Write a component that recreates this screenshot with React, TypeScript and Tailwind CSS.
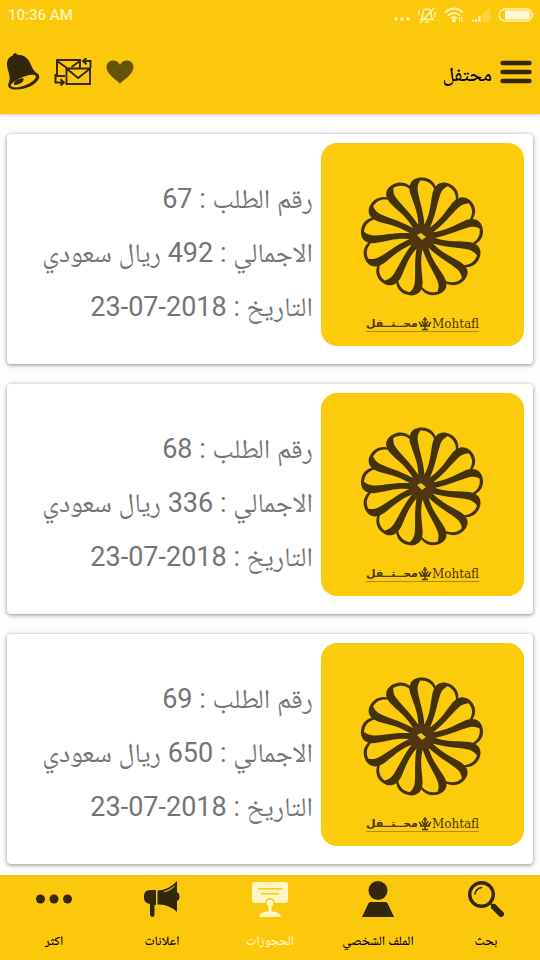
import type { ReactNode } from "react";

const ORDERS = [
  { id: 67, total: 492, date: "23-07-2018" },
  { id: 68, total: 336, date: "23-07-2018" },
  { id: 69, total: 650, date: "23-07-2018" },
];

const PETALS = Array.from({ length: 13 }, (_, i) => (i * 360) / 13);

function StatusBar() {
  return (
    <div dir="ltr" className="flex h-[30px] items-center justify-between pr-1.5 pl-2 text-[#fff3b0]">
      <span className="text-[15px] leading-5 font-medium">10:36 AM</span>
      <div className="flex items-center gap-2">
        <svg className="mt-2 h-1 w-4" viewBox="0 0 16 4" fill="currentColor">
          <circle cx="2" cy="2" r="1.8" /><circle cx="8" cy="2" r="1.8" /><circle cx="14" cy="2" r="1.8" />
        </svg>
        <svg className="h-[18px] w-[18px]" viewBox="0 0 18 18" fill="none" stroke="currentColor" strokeWidth="1.5">
          <path d="M3 13.5h12c-1.6-1.5-1.8-3-1.8-5.500C13.200 4.800 11.800 3 9 3S4.800 4.800 4.800 8c0 2.500-.2 4-1.800 5.500ZM7 15.500q2 1.500 4 0M2 17 16 2M1 4v5M17 6v5" />
        </svg>
        <svg className="h-[16px] w-[20px]" viewBox="0 0 20 16" fill="none" stroke="currentColor" strokeWidth="1.8">
          <path d="M1 5.500q9-8 18 0M4 8.500q6-5 12 0M7 11.500q3-2.500 6 0" />
          <circle cx="10" cy="13.500" r="1" fill="currentColor" />
          <path d="M15.500 10v5M18 10v5" strokeWidth="1.200" />
        </svg>
        <svg className="h-[14px] w-[18px]" viewBox="0 0 18 14">
          <path d="M10 14V6l8-6v14Z" fill="#fbd340" />
          <path d="M0 14v-2h2v2ZM3 14v-3h2v3ZM6 14V8h2.500v6Z" fill="currentColor" />
        </svg>
        <svg className="h-[14px] w-[36px]" viewBox="0 0 36 14">
          <rect x="1" y="1" width="33" height="12" rx="6" fill="none" stroke="currentColor" strokeWidth="1.300" />
          <path d="M7 2.500h22q3 0 3 4.500t-3 4.500H7Z" fill="#fff8d5" />
          <path d="M35 5v4" stroke="currentColor" />
        </svg>
      </div>
    </div>
  );
}

function Header() {
  return (
    <header className="relative z-10 bg-[#fbc80c] shadow-[0_1px_3px_rgba(0,0,0,0.2)]">
      <StatusBar />
      <div className="flex h-[84px] items-center justify-between pr-2 pl-1.5 text-[#33270a]">
        <div className="flex items-center gap-2">
          <button type="button" aria-label="القائمة">
            <svg className="h-6 w-8" viewBox="0 0 32 24" stroke="currentColor" strokeWidth="4.500" strokeLinecap="round">
              <path d="M2.500 3h27M2.500 12h27M2.500 21h27" />
            </svg>
          </button>
          <h1 className="pt-1 text-[20px] leading-8 font-medium text-black">محتفل</h1>
        </div>
        <div className="flex items-center gap-3.5">
          <button type="button" aria-label="المفضلة" className="text-[#66530a]">
            <svg className="h-6 w-7" viewBox="0 0 28 24" fill="currentColor">
              <path d="M14 23.500C10 19.500.500 14 .500 7.200.500 3 3.500.500 7.300.500 10.500.500 13 2.500 14 5c1-2.500 3.500-4.500 6.700-4.500 3.800 0 6.800 2.500 6.800 6.700 0 6.800-9.500 12.300-13.500 16.300Z" />
            </svg>
          </button>
          <button type="button" aria-label="الرسائل">
            <svg className="h-7 w-[38px]" viewBox="0 0 38 28" fill="none" stroke="currentColor" strokeWidth="1.900">
              <path d="M11 18H3V2h23v8M3 3l10 7M26 3l-8.500 6" />
              <path d="M12.500 10.500h23.500v15.500H12.500ZM13 11l11.200 9L35.500 11" />
              <path d="M36.500 10V3h-7M32.500 0 29 3l3.500 3.200M1.500 16v8.500h8M6.500 21.300 10 24.500l-3.500 3" />
            </svg>
          </button>
          <button type="button" aria-label="التنبيهات">
            <svg className="h-[38px] w-[34px]" viewBox="0 0 34 38">
              <path fillRule="evenodd" fill="currentColor" d="M7 2.500C7-.200 10.500-.500 11.200 1.800c6.500-.500 11.300 3.700 13.300 9 2 5 3.500 7.700 7 9.700 4.500 3.500 0 9.500-7.500 13C16 37.200 4.500 37.700 2.500 34c-1-2.200.2-4 .8-6C5 22 .5 16 1 10.500 1.300 6 3.800 3.500 7 2.500ZM5 33c2 2.500 10 1.500 17-2 6-3 9-6.800 7.300-8.500C27 20.700 19 22.500 12.500 26 7 29 4.200 31.500 5 33Z" />
              <path fill="currentColor" d="M8 32c-.5-3.500 2-5.500 9-7 2 2.500-1.500 6.500-9 7Z" />
            </svg>
          </button>
        </div>
      </div>
    </header>
  );
}

function BrandLogo() {
  return (
    <div className="flex h-[203px] w-[203px] shrink-0 flex-col items-center rounded-2xl bg-[#fccb0b] pt-8 text-[#4a3607]">
      <svg className="h-[124px] w-[128px]" viewBox="-63 -62 128 124" fill="#44330a">
        {PETALS.map((angle) => (
          <path
            key={angle}
            transform={`scale(1.03 1) rotate(${angle - 3})`}
            d="M-3-8C-2-24-6-32-8.500-42-12-54-6-60 3-59.500 12-59 17-52 17-43L16.200-42C14-51 10-57-.5-56.500 4-57-3-55-1.500-45-.5-35 3.500-24 3-8Z"
          />
        ))}
        <circle r="13" fill="#513610" />
        <path d="M-5-2-1-4 4 0 0 3Z" fill="#f0c41a" />
      </svg>
      <div dir="ltr" className="mt-[17px] flex h-4 items-center border-b border-[#b08a0a] whitespace-nowrap">
        <span dir="rtl" className="font-['DejaVu_Sans'] text-[11px] leading-4 font-bold">محــتــفل</span>
        <svg className="h-3.5 w-3.5" viewBox="0 0 14 14" fill="none" stroke="currentColor" strokeWidth="1.500">
          <path d="M7 0v13M5 2.500h4M1 5l3 4M13 5l-3 4M4 4l2 4M10 4 8 8M2 9h10M4 12.500h6" />
        </svg>
        <span className="font-['DejaVu_Serif'] text-[12px] leading-4">Mohtafl</span>
      </div>
    </div>
  );
}

function OrderCard({ id, total, date }: { id: number; total: number; date: string }) {
  return (
    <li className="flex h-[230px] items-center gap-2 rounded bg-white pr-[9px] pl-2 shadow-[0_1px_4px_rgba(0,0,0,0.45)]">
      <div className="mb-[9px]">
        <BrandLogo />
      </div>
      <div className="grow pt-2 text-[27px] leading-[54px] text-[#757575]">
        <p>رقم الطلب : {id}</p>
        <p>الاجمالي : {total} ريال سعودي</p>
        <p>التاريخ : <span dir="ltr">{date}</span></p>
      </div>
    </li>
  );
}

function NavItem({ label, active, children }: { label: string; active?: boolean; children: ReactNode }) {
  return (
    <a
      href="#"
      aria-current={active ? "page" : undefined}
      className={`flex flex-1 flex-col items-center gap-3 pt-1.5 ${active ? "text-[#fff6c4]" : "text-[#33270a]"}`}
    >
      <svg className="h-9 w-9" viewBox="0 0 36 36" fill="currentColor">{children}</svg>
      <span className={`text-[13px] leading-6 font-medium whitespace-nowrap ${active ? "" : "text-black"}`}>{label}</span>
    </a>
  );
}

function BottomNav() {
  return (
    <nav className="relative z-10 flex h-[85px] shrink-0 bg-[#fbc80c]">
      <NavItem label="بحث">
        <circle cx="13.500" cy="13.500" r="11.800" fill="none" stroke="currentColor" strokeWidth="3.400" />
        <path d="M7 13q.500-5 6.500-6.500" fill="none" stroke="currentColor" strokeWidth="1.600" strokeLinecap="round" />
        <path d="m26 26 7 7" stroke="currentColor" strokeWidth="6" strokeLinecap="round" />
        <path d="m22 22 4 4" stroke="currentColor" strokeWidth="2" />
      </NavItem>
      <NavItem label="الملف الشخصي">
        <circle cx="18" cy="9.500" r="9.500" />
        <path d="M10.500 21h15q1.500 0 2.200 1.500L34 36H2l6.300-13.500Q9 21 10.500 21Z" />
      </NavItem>
      <NavItem label="الحجوزات" active>
        <path fillRule="evenodd" d="M3 1h30q3 0 3 3v15q0 3-3 3H23q-1-5-5-5t-5 5H3q-3 0-3-3V4q0-3 3-3Zm3 6v1.600h24V7Zm3 5v1.600h18V12Z" />
        <circle cx="18" cy="22" r="3.500" />
        <path d="M16.500 23h3v7.500q8.500 0 9.500 5.500h-22q1-5.500 9.500-5.500Z" />
      </NavItem>
      <NavItem label="اعلانات">
        <path fillRule="evenodd" d="M12 9v15h-1.500v9.500Q10.500 36 8.500 36T6 33.500V23Q0 22 0 17V15q0-6 6-6ZM13.500 9.500Q25 9 33 0v11q2.500 1 2.500 4.500T33 20v11Q25 23 13.500 23.500ZM20 10.500v1q7-2 11-6.500V4.500q-5 4-11 6Z" />
      </NavItem>
      <NavItem label="اكثر">
        <circle cx="4.500" cy="18" r="4.500" /><circle cx="18" cy="18" r="4.500" /><circle cx="31.500" cy="18" r="4.500" />
      </NavItem>
    </nav>
  );
}

export default function App() {
  return (
    <div dir="rtl" className="flex h-screen flex-col bg-[#fdfdfd] font-[Roboto,'Noto_Naskh_Arabic','DejaVu_Sans',sans-serif]">
      <Header />
      <main className="min-h-0 grow overflow-y-auto">
        <ul className="flex flex-col gap-5 px-[7px] pt-5 pb-2">
          {ORDERS.map((order) => (
            <OrderCard key={order.id} {...order} />
          ))}
        </ul>
      </main>
      <BottomNav />
    </div>
  );
}
